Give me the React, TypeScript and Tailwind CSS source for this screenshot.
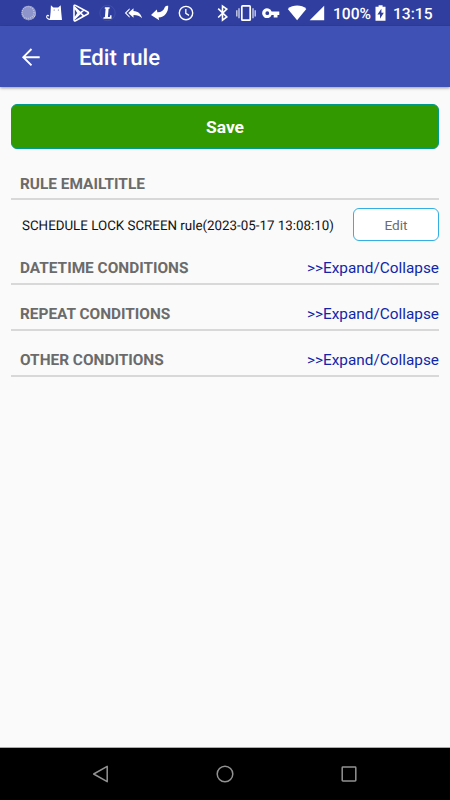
import type { ReactNode } from "react";

function Glyph({ box, className, children }: { box: string; className: string; children: ReactNode }) {
  return (
    <svg viewBox={box} className={`h-5 shrink-0 ${className}`} fill="white" aria-hidden="true">
      {children}
    </svg>
  );
}

function StatusBar() {
  return (
    <div className="flex h-[26px] shrink-0 items-center bg-[#303f9f] pl-5 text-white">
      <Glyph box="20 3 18 20" className="w-[18px]">
        <circle cx="28.7" cy="13" r="7.3" fillOpacity="0.45" />
        <circle cx="28" cy="12.5" r="6" fill="none" stroke="white" strokeOpacity="0.4" strokeWidth="1.5" strokeDasharray="1 1" />
        <path d="M35.2 10.5A7.3 7.3 0 0 1 26.5 20 7.6 7.6 0 0 0 35.2 10.5Z" />
      </Glyph>
      <Glyph box="44 3 20 20" className="ml-1.5 w-5">
        <path d="M50.9 5.2 53.4 7.4H58.2L60.7 5.2 61.2 12 62 20H49.8L50.6 12Z" />
        <path d="M51 19.3C48 19.6 46.3 18 46.7 16.3 47 15.2 48.3 15 48.6 15.9" fill="none" stroke="white" strokeWidth="1.1" strokeLinecap="round" />
        <circle cx="54.1" cy="10" r="0.5" fill="#303f9f" />
        <circle cx="58.3" cy="10" r="0.5" fill="#303f9f" />
      </Glyph>
      <Glyph box="71 3 20 20" className="ml-[7px] w-5">
        <path
          d="M74 6.3Q74 4.7 75.5 5.4L87.7 12Q89.2 13 87.7 14L75.5 20.7Q74 21.3 74 19.8ZM74.5 18.8 83.8 9.9M74.5 7.2 83.8 16.1M74.5 7.2 78.2 13 74.5 18.8"
          fill="none"
          stroke="white"
          strokeWidth="1.6"
          strokeLinejoin="round"
        />
      </Glyph>
      <Glyph box="99 3 18 20" className="ml-2 w-[18px]">
        <circle cx="107.5" cy="13" r="7.7" fill="none" stroke="white" strokeOpacity="0.08" />
        <path d="M104.9 7.3H109.6V8.7H108.6L107.9 17H109.8L110.2 15.2H111.5V18.8H103.4V17.4L104.9 17 105.6 8.7H104.7Z" />
      </Glyph>
      <Glyph box="124 3 20 20" className="ml-[7px] w-5">
        <path d="M133.5 8.2V11.1C138.4 11.5 141.2 14.2 142 18.3 139.9 15.9 137.2 15.1 133.5 15.1V17.8L128.3 13ZM129.6 8.2V9.8L126.4 13 129.6 16.2V17.8L124.8 13Z" />
      </Glyph>
      <Glyph box="150 3 20 20" className="ml-1.5 w-5">
        <path d="M151 15 156.8 9.6 157.4 12.2C160.8 12.4 163.6 10.6 164.8 7.2 165.4 6 166.6 5.8 168.2 5.8 168.4 12.6 164.6 17.2 158.6 17.6L159.2 20.2Z" />
      </Glyph>
      <Glyph box="178 3 18 20" className="ml-2 w-[18px]">
        <circle cx="186" cy="13.1" r="6.7" fill="none" stroke="white" strokeWidth="1.4" />
        <path d="M185.8 9V13.4L189 15.4" fill="none" stroke="white" strokeWidth="1.3" />
      </Glyph>
      <Glyph box="216 3 14 20" className="ml-5 w-3.5">
        <path d="M218.2 8.7 226.8 17 222.5 20.2V6L226.8 9.2 218.2 17.5" fill="none" stroke="white" strokeWidth="1.6" />
      </Glyph>
      <Glyph box="236 3 20 20" className="ml-1.5 w-5">
        <rect x="241.8" y="5.9" width="8.4" height="14.3" rx="0.8" fill="none" stroke="white" strokeWidth="1.7" />
        <path d="M236.8 10.3V16.5M239 8.2V18.3M253 8.2V18.3M255.2 10.3V16.5" stroke="white" strokeOpacity="0.7" strokeWidth="1.5" />
      </Glyph>
      <Glyph box="262 3 18 20" className="ml-1.5 w-[18px]">
        <path
          fillRule="evenodd"
          d="M271.6 11.5H279.3V14.9H277.5V17.5H273.7V14.9H271.6A4.9 4.9 0 1 1 271.6 11.5ZM267.3 11.3A1.9 1.9 0 1 0 267.3 15.1 1.9 1.9 0 1 0 267.3 11.3Z"
        />
      </Glyph>
      <Glyph box="287 3 20 20" className="ml-[7px] w-5">
        <path d="M287.8 8.9C293 4.5 301.5 4.5 306.3 8.9L297.1 20.3Z" />
      </Glyph>
      <Glyph box="308 3 18 20" className="ml-px w-[18px]">
        <path d="M309.7 20.3 324.2 5.8V20.3Z" />
      </Glyph>
      <span className="ml-[7px] mt-0.5 w-[41px] whitespace-nowrap text-[15.6px] leading-5 font-medium">100%</span>
      <Glyph box="374 3 14 20" className="w-3.5">
        <path d="M378.6 5.2H382.6V6.7H385.5V20.8H375.5V6.7H378.6Z" />
        <path d="M381.4 8.8 377.4 14.5H380V18.7L383.8 12.8H381.4Z" fill="#303f9f" />
      </Glyph>
      <span className="ml-[5px] mt-0.5 whitespace-nowrap text-[15.6px] leading-5 font-medium">13:15</span>
    </div>
  );
}

function SectionHeader({ title, toggle, className }: { title: string; toggle?: boolean; className: string }) {
  return (
    <div className={`flex items-start justify-between border-b-2 border-[#d8d8d8] pl-[9px] leading-5 ${className}`}>
      <h2 className="text-[15.4px] font-bold whitespace-nowrap text-[#6b6b6b]">{title}</h2>
      {toggle && <button className="text-[15.35px] leading-5 whitespace-nowrap text-[#1027aa]">&gt;&gt;Expand/Collapse</button>}
    </div>
  );
}

export default function App() {
  return (
    <div className="flex h-[800px] w-[450px] flex-col overflow-hidden bg-[#fafafa] font-['Roboto',sans-serif] [text-rendering:geometricPrecision]">
      <StatusBar />
      <header className="z-10 flex h-[61px] shrink-0 items-center bg-[#3f51b5] pl-[21px] text-white shadow-[0_1px_3px_rgba(0,0,0,0.4)]">
        <svg viewBox="0 0 20 20" className="size-5" fill="none" stroke="white" strokeWidth="1.9" aria-hidden="true">
          <path d="M18.7 10.2H2.3M10.5 2 2.3 10.2 10.5 18.4" />
        </svg>
        <h1 className="ml-[38px] mt-[3px] text-[22.2px] leading-7 font-medium">Edit rule</h1>
      </header>
      <main className="flex-1 px-[11px] pt-[17px]">
        <button className="block h-[45px] w-full rounded-md border border-[#009b88] bg-[#339900] pt-0.5 text-[17.4px] font-bold text-white">
          Save
        </button>
        <SectionHeader title="RULE EMAILTITLE" className="mt-[25px] h-[26px]" />
        <div className="flex h-[58px] items-start justify-between pt-2 pl-[11px]">
          <p className="mt-[9px] text-[13.35px] leading-5 whitespace-nowrap text-[#111]">SCHEDULE LOCK SCREEN rule(2023-05-17 13:08:10)</p>
          <button className="h-[33px] w-[86px] rounded-md border border-[#35aee2] bg-white pt-px text-[13.7px] text-[#6d6d6d]">Edit</button>
        </div>
        <SectionHeader title="DATETIME CONDITIONS" toggle className="h-[27px]" />
        <SectionHeader title="REPEAT CONDITIONS" toggle className="mt-[19px] h-[27px]" />
        <SectionHeader title="OTHER CONDITIONS" toggle className="mt-[19px] h-[27px]" />
      </main>
      <nav className="flex h-[53px] shrink-0 items-center justify-between border-t border-[#aaa] bg-black px-[91px] text-[#929292]">
        <svg viewBox="0 0 20 20" className="size-5" fill="none" stroke="currentColor" strokeWidth="1.5" strokeLinejoin="round" aria-hidden="true">
          <path d="M16.2 2.3V17.7L2.7 10Z" />
        </svg>
        <svg viewBox="0 0 20 20" className="size-5" fill="none" stroke="currentColor" strokeWidth="1.5" aria-hidden="true">
          <circle cx="10" cy="10" r="7.8" />
        </svg>
        <svg viewBox="0 0 20 20" className="size-5" fill="none" stroke="currentColor" strokeWidth="1.5" aria-hidden="true">
          <rect x="3.2" y="3" width="13.6" height="14" rx="0.7" />
        </svg>
      </nav>
    </div>
  );
}
